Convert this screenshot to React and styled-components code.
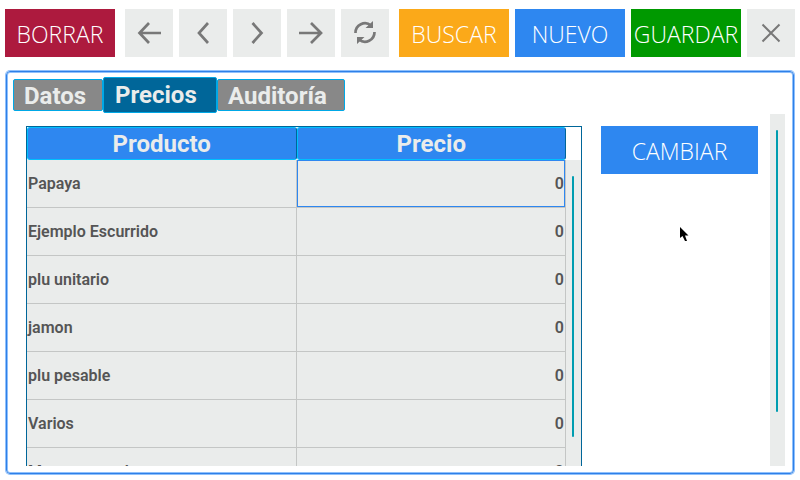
import React from 'react';
import styled, { createGlobalStyle } from 'styled-components';

const GlobalStyle = createGlobalStyle`
  * { box-sizing: border-box; }
  body { margin: 0; background: #ffffff; font-family: Roboto, sans-serif; overflow: hidden; }
`;

const Screen = styled.div`
  display: flex;
  flex-direction: column;
  gap: 14px;
  height: 100vh;
  padding: 9px 5px 6px;
`;

const Toolbar = styled.header`
  display: flex;
  justify-content: space-between;
`;

const Group = styled.div`
  display: flex;
  gap: 6px;
`;

const tones = {
  red: '#ad1a3e',
  orange: '#fba919',
  blue: '#2e87f0',
  green: '#009900',
};

const ActionButton = styled.button`
  width: ${({ $wide }) => ($wide ? '157px' : '110px')};
  height: 48px;
  padding: 3px 0 0;
  border: 0;
  background: ${({ $tone }) => tones[$tone]};
  color: #ffffff;
  font: 300 23px/45px 'Open Sans', sans-serif;
  text-align: center;
  white-space: nowrap;
`;

const IconButton = styled.button`
  display: flex;
  align-items: center;
  justify-content: center;
  width: 48px;
  height: 48px;
  padding: 0;
  border: 0;
  background: #eaeceb;
  color: #787878;
`;

const Icon = styled.svg`
  display: block;
  width: 48px;
  height: 48px;
  fill: none;
  stroke: currentColor;
  stroke-width: ${({ $thin }) => ($thin ? 2 : 2.7)};
`;

const Panel = styled.main`
  flex: 1;
  min-height: 0;
  display: flex;
  flex-direction: column;
  margin: 0 1px;
  padding: 5px 8px 7px 6px;
  border: 1px solid #2e80e8;
  border-radius: 4px;
  box-shadow: 0 0 0 1px #8fc0fb, inset 0 0 0 1px #8fc0fb;
`;

const Tabs = styled.nav`
  display: flex;
  align-items: center;
  height: 36px;
`;

const Tab = styled.button`
  width: ${({ $width }) => $width}px;
  height: ${({ $active }) => ($active ? 36 : 32)}px;
  padding: ${({ $active }) => ($active ? '0 0 0 11px' : '3px 0 0 10px')};
  border: 1px solid #00a8e6;
  border-radius: 2px;
  background: ${({ $active }) => ($active ? '#006699' : '#888888')};
  color: #eaeceb;
  font: 700 24px/27px Roboto, sans-serif;
  text-align: left;
`;

const Body = styled.div`
  flex: 1;
  min-height: 0;
  display: flex;
  justify-content: space-between;
  padding-top: 1px;
`;

const Content = styled.div`
  flex: 1;
  display: flex;
  gap: 19px;
  padding: 12px 12px 0 13px;
  min-height: 0;
`;

const TableFrame = styled.section`
  flex: 1;
  display: flex;
  overflow: hidden;
  border: 1px solid #006699;
  border-bottom: 0;
`;

const TableArea = styled.div`
  flex: 1;
  min-width: 0;
`;

const Table = styled.table`
  width: 100%;
  table-layout: fixed;
  border-collapse: separate;
  border-spacing: 0;
`;

const HeadCell = styled.th`
  height: 33px;
  padding: 2px 0 0;
  border: 1px solid #00bfff;
  border-right-color: #006699;
  border-radius: 3px;
  background: #2e87f0;
  color: #eaeceb;
  font: 700 24px/29px Roboto, sans-serif;
`;

const Cell = styled.td`
  height: 48px;
  padding: 0 1px;
  border: 1px solid #c4c6c5;
  border-width: 0 1px 1px 0;
  background: #eaeceb;
  color: #555555;
  font: 600 16px/20px Roboto, sans-serif;
  text-align: ${({ $number }) => ($number ? 'right' : 'left')};
  ${({ $selected }) => $selected && 'box-shadow: inset 0 0 0 1px #2e87f0;'}
`;

const ScrollTrack = styled.div`
  width: 15px;
  margin-top: ${({ $top }) => $top || 0}px;
  padding: 16px 6px 0;
  background: #eaeceb;
`;

const ScrollThumb = styled.div`
  width: 2px;
  height: ${({ $share }) => $share}%;
  border-radius: 1px;
  background: #009db0;
`;

const Pointer = styled.svg`
  position: absolute;
  left: 680px;
  top: 227px;
  width: 9px;
  height: 15px;
  pointer-events: none;
`;

const products = ['Papaya', 'Ejemplo Escurrido', 'plu unitario', 'jamon', 'plu pesable', 'Varios', 'Manzana verde'];

const NavButton = ({ label, d, thin, children }) => (
  <IconButton type="button" aria-label={label}>
    <Icon viewBox="0 0 48 48" $thin={thin} aria-hidden="true">
      {d && <path d={d} />}
      {children}
    </Icon>
  </IconButton>
);

export default function App() {
  return (
    <Screen>
      <GlobalStyle />
      <Toolbar>
        <ActionButton type="button" $tone="red">BORRAR</ActionButton>
        <Group>
          <NavButton label="Primero" d="M36 24H14.5M24 14L14.5 24L24 34" />
          <NavButton label="Anterior" d="M29 14L20 24L29 34" />
          <NavButton label="Siguiente" d="M19.500 14L28.500 24L19.500 34" />
          <NavButton label="Último" d="M12 24H34M24 14L34 24L24 34" />
          <NavButton label="Actualizar">
            <path d="M14.500 24A9.500 9.500 0 0 1 30 16.500M33.500 23A9.500 9.500 0 0 1 18 30.500" />
            <path d="M32 12V19H24.500ZM16 35V28H23.500Z" fill="currentColor" stroke="none" />
          </NavButton>
        </Group>
        <Group>
          <ActionButton type="button" $tone="orange">BUSCAR</ActionButton>
          <ActionButton type="button" $tone="blue">NUEVO</ActionButton>
          <ActionButton type="button" $tone="green">GUARDAR</ActionButton>
          <NavButton label="Cerrar" d="M15.500 15.500L32.500 32.500M32.500 15.500L15.500 32.500" thin />
        </Group>
      </Toolbar>
      <Panel>
        <Tabs aria-label="Secciones">
          <Tab type="button" $width={90}>Datos</Tab>
          <Tab type="button" $width={114} $active aria-current="page">Precios</Tab>
          <Tab type="button" $width={128}>Auditoría</Tab>
        </Tabs>
        <Body>
          <Content>
            <TableFrame>
              <TableArea>
                <Table>
                  <thead>
                    <tr>
                      <HeadCell scope="col">Producto</HeadCell>
                      <HeadCell scope="col">Precio</HeadCell>
                    </tr>
                  </thead>
                  <tbody>
                    {products.map((name, i) => (
                      <tr key={name}>
                        <Cell>{name}</Cell>
                        <Cell $number $selected={i === 0}>0</Cell>
                      </tr>
                    ))}
                  </tbody>
                </Table>
              </TableArea>
              <ScrollTrack $top={33}>
                <ScrollThumb $share={90} />
              </ScrollTrack>
            </TableFrame>
            <ActionButton type="button" $tone="blue" $wide>CAMBIAR</ActionButton>
          </Content>
          <ScrollTrack>
            <ScrollThumb $share={84} />
          </ScrollTrack>
        </Body>
      </Panel>
      <Pointer viewBox="0 0 9 15" aria-hidden="true">
        <path d="M0 0V11L2.500 9L5 14H7L5 8.500H8.500Z" fill="#000000" />
      </Pointer>
    </Screen>
  );
}
